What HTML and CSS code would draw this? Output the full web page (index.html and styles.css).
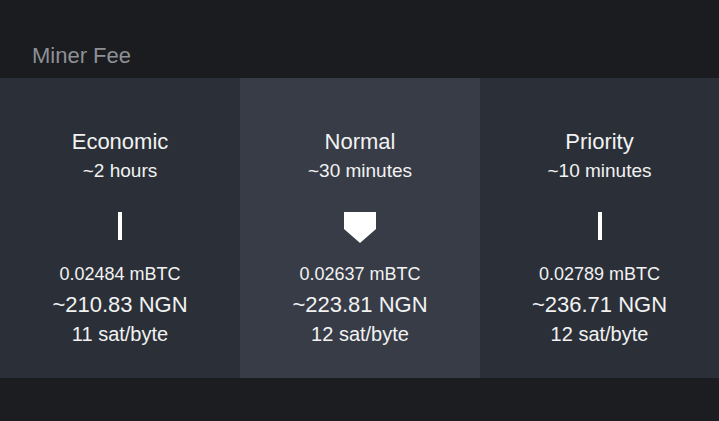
FILE: index.html
```
<!DOCTYPE html>
<html>
<head>
<meta charset="utf-8">
<link rel="stylesheet" href="styles.css">
</head>
<body>
<div class="page">
  <div class="header"><span class="title">Miner Fee</span></div>
  <div class="cards">
    <div class="card">
      <div class="name">Economic</div>
      <div class="time">~2 hours</div>
      <div class="marker"><div class="bar"></div></div>
      <div class="btc">0.02484 mBTC</div>
      <div class="fiat">~210.83 NGN</div>
      <div class="rate">11 sat/byte</div>
    </div>
    <div class="card selected">
      <div class="name">Normal</div>
      <div class="time">~30 minutes</div>
      <div class="marker"><svg class="pointer" width="32" height="31" viewBox="0 0 32 31"><polygon points="0,0 32,0 32,17 16,31 0,17" fill="#ffffff"/></svg></div>
      <div class="btc">0.02637 mBTC</div>
      <div class="fiat">~223.81 NGN</div>
      <div class="rate">12 sat/byte</div>
    </div>
    <div class="card">
      <div class="name">Priority</div>
      <div class="time">~10 minutes</div>
      <div class="marker"><div class="bar"></div></div>
      <div class="btc">0.02789 mBTC</div>
      <div class="fiat">~236.71 NGN</div>
      <div class="rate">12 sat/byte</div>
    </div>
  </div>
  <div class="footer"></div>
</div>
</body>
</html>
```
FILE: styles.css
```
html, body {
  margin: 0;
  padding: 0;
  background: #1c1d21;
  font-family: "Liberation Sans", Arial, sans-serif;
}
.page {
  width: 719px;
  height: 421px;
  display: flex;
  flex-direction: column;
}
.header {
  height: 78px;
  background: #1b1c20;
  display: flex;
  align-items: flex-end;
  padding-left: 32px;
  box-sizing: border-box;
  padding-bottom: 8px;
}
.title {
  color: #8e9095;
  font-size: 22px;
  line-height: 28px;
}
.cards {
  height: 300px;
  display: grid;
  grid-template-columns: 240px 240px 239px;
  background: #2b3038;
}
.card {
  display: flex;
  flex-direction: column;
  align-items: center;
  color: #f2f2f2;
  padding-top: 50px;
}
.card.selected {
  background: #373c47;
}
.name {
  font-size: 22px;
  line-height: 28px;
}
.time {
  font-size: 19px;
  line-height: 24px;
  margin-top: 3px;
}
.marker {
  margin-top: 29px;
  height: 31px;
  display: flex;
  justify-content: center;
  align-items: flex-start;
}
.bar {
  width: 4px;
  height: 28px;
  background: #ffffff;
}
.pointer {
  display: block;
}
.btc {
  font-size: 18px;
  line-height: 24px;
  margin-top: 19px;
}
.fiat {
  font-size: 22px;
  line-height: 28px;
  margin-top: 5px;
}
.rate {
  font-size: 20px;
  line-height: 24px;
  margin-top: 3px;
}
.footer {
  flex: 1;
  background: #1c1d21;
}
```
